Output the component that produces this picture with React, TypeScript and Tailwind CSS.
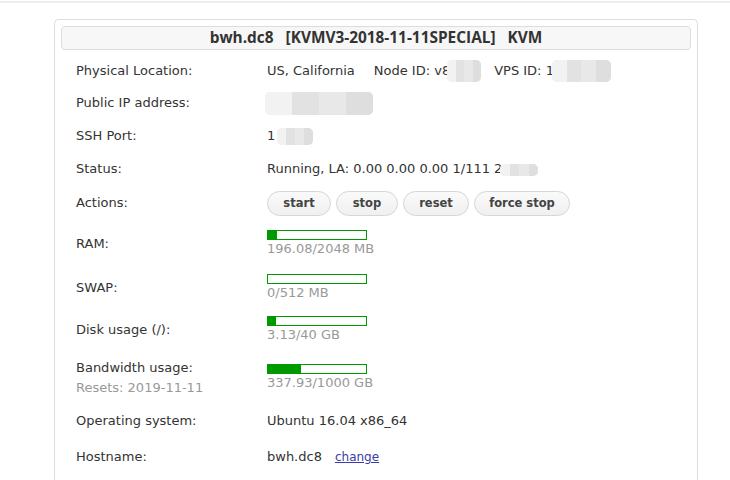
import React from 'react';

const font = { fontFamily: '"DejaVu Sans", Verdana, sans-serif' };

function Blur({ w, h = 22 }: { w: number; h?: number }) {
  return (
    <span
      className="inline-flex align-middle overflow-hidden rounded-[5px] bg-[#ececec] blur-[0.6px]"
      style={{ width: w, height: h, marginTop: -(h - 14) / 2, marginBottom: -(h - 14) / 2 }}
    >
      <span className="h-full w-1/4 bg-[#f2f2f2]" />
      <span className="h-full w-1/4 bg-[#e2e2e2]" />
      <span className="h-full w-1/4 bg-[#e8e8e8]" />
      <span className="h-full w-1/4 bg-[#dedede]" />
    </span>
  );
}

function Bar({ pct, text }: { pct: number; text: string }) {
  return (
    <div className="flex flex-col">
      <div className="h-[10px] w-[100px] border border-[#009900] bg-white">
        <div className="h-full bg-[#009900]" style={{ width: `${pct}%` }} />
      </div>
      <div className="text-[13px] leading-[18px] text-[#999]">{text}</div>
    </div>
  );
}

function Row({ label, h, children }: { label: React.ReactNode; h: string; children: React.ReactNode }) {
  return (
    <div className={`flex items-center ${h}`}>
      <div className="w-[191px] shrink-0 text-[13px] leading-[18px] text-[#333]">{label}</div>
      <div className="flex items-center text-[13px] leading-[18px] text-[#333]">{children}</div>
    </div>
  );
}

const actions = [
  { label: 'start', w: 'w-[64px]' },
  { label: 'stop', w: 'w-[62px]' },
  { label: 'reset', w: 'w-[66px]' },
  { label: 'force stop', w: 'w-[96px]' },
];

export default function App() {
  return (
    <div className="min-h-[480px] bg-white" style={font}>
      <div className="h-[3px] border-b-2 border-[#eeeeee]" />
      <div className="ml-[54px] mt-[16px] w-[644px] h-[480px] rounded-t-[5px] border border-b-0 border-[#dddddd] px-[6px] pt-[6px]">
        <div
          className="flex h-[24px] items-center justify-center gap-[12px] rounded-[4px] border border-[#dddddd] bg-[#f7f7f7] text-[15.4px] font-bold leading-[22px] text-[#333]"
          style={{ fontFamily: '"Open Sans", sans-serif' }}
        >
          <span>bwh.dc8</span>
          <span>[KVMV3-2018-11-11SPECIAL]</span>
          <span>KVM</span>
        </div>
        <div className="mt-[4px] pl-[15px]">
          <Row label="Physical Location:" h="h-[33px]">
            <span>US, California</span>
            <span className="ml-[19px]">Node ID: v8</span>
            <span className="-ml-[3px]"><Blur w={34} /></span>
            <span className="ml-[13px]">VPS ID: 1</span>
            <span className="-ml-[2px]"><Blur w={59} /></span>
          </Row>
          <Row label="Public IP address:" h="h-[32px]">
            <span className="-ml-[2px]"><Blur w={108} h={23} /></span>
          </Row>
          <Row label="SSH Port:" h="h-[33px]">
            <span>1</span>
            <span className="ml-[2px]"><Blur w={36} h={17} /></span>
          </Row>
          <Row label="Status:" h="h-[34px]">
            <span>Running, LA: 0.00 0.00 0.00 1/111 2</span>
            <span className="-ml-[2px]"><Blur w={38} h={12} /></span>
          </Row>
          <Row label="Actions:" h="h-[34px]">
            <div className="flex gap-[5px]">
              {actions.map((a) => (
                <button
                  key={a.label}
                  className={`${a.w} h-[25px] rounded-full border border-[#d6d6d6] bg-gradient-to-b from-[#fafafa] to-[#f0f0f0] text-[11.5px] font-bold text-[#444]`}
                >
                  {a.label}
                </button>
              ))}
            </div>
          </Row>
          <Row label="RAM:" h="h-[48px]">
            <Bar pct={9.6} text="196.08/2048 MB" />
          </Row>
          <Row label="SWAP:" h="h-[40px]">
            <Bar pct={0} text="0/512 MB" />
          </Row>
          <Row label="Disk usage (/):" h="h-[44px]">
            <Bar pct={7.8} text="3.13/40 GB" />
          </Row>
          <Row
            label={
              <div className="flex flex-col gap-[2px]">
                <span>Bandwidth usage:</span>
                <span className="text-[#999]">Resets: 2019-11-11</span>
              </div>
            }
            h="h-[52px]"
          >
            <Bar pct={33.8} text="337.93/1000 GB" />
          </Row>
          <Row label="Operating system:" h="h-[34px]">
            <span>Ubuntu 16.04 x86_64</span>
          </Row>
          <Row label="Hostname:" h="h-[38px]">
            <span>bwh.dc8</span>
            <a href="#" className="ml-[13px] text-[12px] text-[#3b3ba8] underline">change</a>
          </Row>
        </div>
      </div>
    </div>
  );
}
